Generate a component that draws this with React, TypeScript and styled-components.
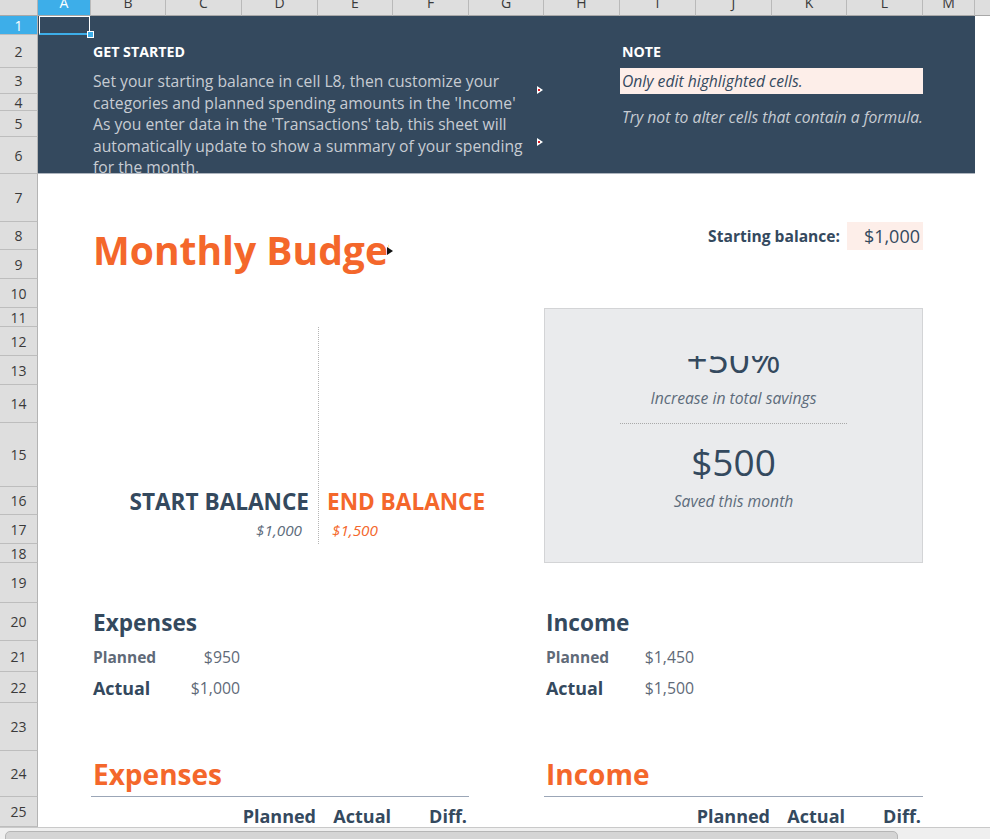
import React from 'react';
import styled, { createGlobalStyle } from 'styled-components';

const COLS = ['A', 'B', 'C', 'D', 'E', 'F', 'G', 'H', 'I', 'J', 'K', 'L', 'M', 'N'];
const colWidths = [53, 75, 76, 76, 75, 76, 75, 76, 76, 76, 75, 76, 52, 76];
const rowHeights = [19, 33, 26, 17, 26, 37, 48, 28, 29, 29, 19, 29, 29, 38, 64, 28, 29, 19, 40, 38, 31, 31, 48, 46, 30];

const dark = '#34495e';
const orange = '#f4672b';
const muted = '#5d6b7b';

const col = (c: string) => COLS.indexOf(c) + 2;
// grid-area for a cell range, in sheet coordinates (row 1 = first sheet row)
const area = (r1: number, c1: string, r2 = r1, c2 = c1) =>
  `${r1 + 1} / ${col(c1)} / ${r2 + 2} / ${col(c2) + 1}`;

const GlobalStyle = createGlobalStyle`
  html, body {
    margin: 0;
    padding: 0;
    background: #ffffff;
    overflow: hidden;
  }
  body {
    font-family: "Open Sans", "Noto Sans", sans-serif;
  }
`;

const Page = styled.div`
  width: 990px;
  height: 839px;
  display: flex;
  flex-direction: column;
  overflow: hidden;
`;

const Sheet = styled.div`
  display: grid;
  grid-template-columns: 38px ${colWidths.map((w) => `${w}px`).join(' ')};
  grid-template-rows: 16px ${rowHeights.map((h) => `${h}px`).join(' ')};
  height: 827px;
  flex: none;
`;

const Corner = styled.div`
  grid-area: 1 / 1 / 2 / 2;
  background: #dcdcdc;
  border-right: 1px solid #b4b4b4;
  border-bottom: 1px solid #a8a8a8;
  box-sizing: border-box;
`;

const ColHead = styled.div<{ $active?: boolean }>`
  grid-row: 1;
  display: flex;
  justify-content: center;
  align-items: flex-start;
  overflow: hidden;
  box-sizing: border-box;
  background: ${(p) => (p.$active ? '#3daee9' : '#dedede')};
  color: ${(p) => (p.$active ? '#ffffff' : '#3a3a3a')};
  border-right: 1px solid #b9b9b9;
  border-bottom: 1px solid #a8a8a8;
  font-size: 14px;
  line-height: 16px;

  span {
    margin-top: -5px;
  }
`;

const RowHead = styled.div<{ $active?: boolean }>`
  grid-column: 1;
  display: flex;
  justify-content: center;
  align-items: center;
  box-sizing: border-box;
  background: ${(p) => (p.$active ? '#3daee9' : '#dedede')};
  color: ${(p) => (p.$active ? '#ffffff' : '#3a3a3a')};
  border-right: 1px solid #b4b4b4;
  border-bottom: 1px solid #bdbdbd;
  font-size: 14px;
  overflow: hidden;
`;

const Banner = styled.div`
  grid-area: ${area(1, 'A', 6, 'M')};
  background: ${dark};
  border-bottom: 1px solid #aeb5be;
`;

const Cell = styled.div<{
  $area: string;
  $align?: 'flex-start' | 'center' | 'flex-end';
  $valign?: 'flex-start' | 'center' | 'flex-end';
  $pad?: string;
  $clip?: boolean;
}>`
  grid-area: ${(p) => p.$area};
  display: flex;
  justify-content: ${(p) => p.$align || 'flex-start'};
  align-items: ${(p) => p.$valign || 'center'};
  padding: ${(p) => p.$pad || '0 2px'};
  box-sizing: border-box;
  white-space: nowrap;
  overflow: ${(p) => (p.$clip ? 'hidden' : 'visible')};
  position: relative;
  min-width: 0;
`;

const Selected = styled.div`
  grid-area: ${area(1, 'A')};
  position: relative;
  margin: 0 1px 0 1px;
  border: 1px solid #ffffff;
  border-bottom: 2px solid #3daee9;
  z-index: 2;
`;

const Handle = styled.div`
  position: absolute;
  right: -5px;
  bottom: -5px;
  width: 5px;
  height: 5px;
  background: #3daee9;
  border: 1px solid #ffffff;
`;

const SectionLabel = styled.div`
  color: #ffffff;
  font-weight: 700;
  font-size: 14.2px;
`;

const Intro = styled.div`
  color: #c7ccd3;
  font-size: 15.7px;
  line-height: 21.6px;
  padding-top: 3px;
`;

const Overflow = styled.svg<{ $top: number; $right: number }>`
  position: absolute;
  right: ${(p) => p.$right}px;
  top: ${(p) => p.$top}px;
`;

const NoteLine = styled.div<{ $highlight?: boolean }>`
  flex: 1;
  align-self: stretch;
  display: flex;
  align-items: center;
  padding-left: 2px;
  font-style: italic;
  font-size: 15.7px;
  background: ${(p) => (p.$highlight ? '#fdeee9' : 'transparent')};
  color: ${(p) => (p.$highlight ? '#34495e' : '#c7ccd3')};
`;

const Title = styled.div`
  flex: 1;
  min-width: 0;
  overflow: hidden;
  color: ${orange};
  font-weight: 700;
  font-size: 39px;
  line-height: 1.2;
`;

const BalanceLabel = styled.div`
  color: ${dark};
  font-weight: 700;
  font-size: 15.6px;
`;

const BalanceValue = styled.div`
  flex: 1;
  align-self: stretch;
  display: flex;
  align-items: center;
  justify-content: flex-end;
  padding-right: 3px;
  background: #fdeee9;
  color: ${dark};
  font-size: 18px;
`;

const DottedDivider = styled.div`
  grid-area: ${area(12, 'E', 17, 'E')};
  border-left: 1px dotted #b5b5b5;
`;

const BigLabel = styled.div<{ $tone: 'dark' | 'orange' }>`
  color: ${(p) => (p.$tone === 'orange' ? orange : dark)};
  font-weight: 700;
  font-size: 22.6px;
`;

const SmallAmount = styled.div<{ $tone: 'dark' | 'orange' }>`
  color: ${(p) => (p.$tone === 'orange' ? orange : muted)};
  font-style: italic;
  font-size: 15.3px;
`;

const SavingsBox = styled.div`
  grid-area: ${area(11, 'H', 18, 'L')};
  background: #eaebed;
  border: 1px solid #d3d4d6;
`;

const BigFigure = styled.div<{ $shift?: number }>`
  color: ${dark};
  font-size: 37px;
  line-height: ${(p) => (p.$shift ? 1 : 'normal')};
  margin-top: ${(p) => p.$shift || 0}px;
`;

const Caption = styled.div`
  color: ${muted};
  font-style: italic;
  font-size: 15.7px;
`;

const DottedRule = styled.div`
  grid-area: ${area(15, 'I', 15, 'K')};
  border-top: 1px dotted #a9a9a9;
`;

const SummaryHeading = styled.div`
  color: ${dark};
  font-weight: 700;
  font-size: 22.6px;
`;

const SummaryKey = styled.div<{ $strong?: boolean }>`
  color: ${(p) => (p.$strong ? dark : '#5f6a78')};
  font-weight: 700;
  font-size: ${(p) => (p.$strong ? 17.9 : 15.5)}px;
`;

const SummaryValue = styled.div`
  color: #5f6a78;
  font-size: 15.8px;
`;

const TableHeading = styled.div`
  flex: 1;
  align-self: stretch;
  display: flex;
  align-items: center;
  padding-left: 2px;
  color: ${orange};
  font-weight: 700;
  font-size: 28px;
  border-bottom: 1px solid #9ba6b7;
`;

const ColumnLabel = styled.div`
  color: ${dark};
  font-weight: 700;
  font-size: 18px;
  line-height: 22px;
`;

const Footer = styled.div`
  flex: 1;
  background: #efefef;
  border-top: 1px solid #c9c9c9;
  padding: 3px 0 0 5px;
  box-sizing: border-box;
`;

const ScrollThumb = styled.div`
  width: 893px;
  height: 12px;
  box-sizing: border-box;
  background: #d5d5d5;
  border: 1px solid #b6b6b6;
  border-radius: 5px 5px 0 0;
`;

const Arrow = ({ top, right = 1, dot }: { top: number; right?: number; dot?: boolean }) => (
  <Overflow $top={top} $right={right} width="6" height="8" viewBox="0 0 6 8">
    <polygon points="0,0 6,4 0,8" fill={dot ? '#ffffff' : '#111111'} />
    {dot && <rect x="1" y="3" width="2" height="2" fill="#e01b24" />}
  </Overflow>
);

const introLines = [
  'Set your starting balance in cell L8, then customize your',
  "categories and planned spending amounts in the 'Income'",
  "As you enter data in the 'Transactions' tab, this sheet will",
  'automatically update to show a summary of your spending',
  'for the month.',
];

const summaries = [
  { key: 'exp', title: 'Expenses', at: 'B', valueCol: 'C', planned: '$950', actual: '$1,000' },
  { key: 'inc', title: 'Income', at: 'H', valueCol: 'I', planned: '$1,450', actual: '$1,500' },
];

const tables = [
  { key: 'exp', title: 'Expenses', from: 'B', to: 'F', cols: ['D', 'E', 'F'] },
  { key: 'inc', title: 'Income', from: 'H', to: 'L', cols: ['J', 'K', 'L'] },
];

const App = () => {
  return (
    <Page>
      <GlobalStyle />
      <Sheet>
        <Corner />
        {COLS.map((c, i) => (
          <ColHead key={c} $active={c === 'A'} style={{ gridColumn: i + 2 }}>
            <span>{c}</span>
          </ColHead>
        ))}
        {rowHeights.map((_, i) => (
          <RowHead key={i} $active={i === 0} style={{ gridRow: i + 2 }}>
            {i + 1}
          </RowHead>
        ))}

        <Banner />
        <Selected>
          <Handle />
        </Selected>

        <Cell $area={area(2, 'B', 2, 'D')}>
          <SectionLabel>GET STARTED</SectionLabel>
        </Cell>
        <Cell $area={area(3, 'B', 6, 'G')} $valign="flex-start" $clip>
          <Intro>
            {introLines.map((l) => (
              <div key={l}>{l}</div>
            ))}
          </Intro>
          <Arrow top={18} dot />
          <Arrow top={70} dot />
        </Cell>

        <Cell $area={area(2, 'I', 2, 'L')}>
          <SectionLabel>NOTE</SectionLabel>
        </Cell>
        <Cell $area={area(3, 'I', 3, 'L')} $pad="0">
          <NoteLine $highlight>Only edit highlighted cells.</NoteLine>
        </Cell>
        <Cell $area={area(4, 'I', 5, 'L')} $pad="0" $valign="flex-start">
          <NoteLine style={{ paddingTop: 3 }}>Try not to alter cells that contain a formula.</NoteLine>
        </Cell>

        <Cell $area={area(8, 'B', 9, 'E')} $pad="0 4px 0 2px">
          <Title>Monthly Budget</Title>
          <Arrow top={25} right={0} />
        </Cell>
        <Cell $area={area(8, 'J', 8, 'K')} $align="flex-end" $pad="0 7px 0 0">
          <BalanceLabel>Starting balance:</BalanceLabel>
        </Cell>
        <Cell $area={area(8, 'L')} $pad="0">
          <BalanceValue>$1,000</BalanceValue>
        </Cell>

        <DottedDivider />
        <Cell $area={area(16, 'B', 16, 'D')} $align="flex-end" $pad="0 9px 0 0">
          <BigLabel $tone="dark">START BALANCE</BigLabel>
        </Cell>
        <Cell $area={area(16, 'E', 16, 'G')} $pad="0 0 0 9px">
          <BigLabel $tone="orange">END BALANCE</BigLabel>
        </Cell>
        <Cell $area={area(17, 'B', 17, 'D')} $align="flex-end" $pad="0 16px 0 0">
          <SmallAmount $tone="dark">$1,000</SmallAmount>
        </Cell>
        <Cell $area={area(17, 'E', 17, 'G')} $pad="0 0 0 14px">
          <SmallAmount $tone="orange">$1,500</SmallAmount>
        </Cell>

        <SavingsBox />
        <Cell $area={area(13, 'H', 13, 'L')} $align="center" $valign="flex-start" $clip>
          <BigFigure $shift={-16}>+50%</BigFigure>
        </Cell>
        <Cell $area={area(14, 'H', 14, 'L')} $align="center" $valign="flex-start" $pad="2px 0 0">
          <Caption>Increase in total savings</Caption>
        </Cell>
        <DottedRule />
        <Cell $area={area(15, 'H', 15, 'L')} $align="center" $valign="flex-end">
          <BigFigure>$500</BigFigure>
        </Cell>
        <Cell $area={area(16, 'H', 16, 'L')} $align="center">
          <Caption>Saved this month</Caption>
        </Cell>

        {summaries.map((s) => (
          <React.Fragment key={s.key}>
            <Cell $area={area(20, s.at)}>
              <SummaryHeading>{s.title}</SummaryHeading>
            </Cell>
            <Cell $area={area(21, s.at)}>
              <SummaryKey>Planned</SummaryKey>
            </Cell>
            <Cell $area={area(21, s.valueCol)} $align="flex-end">
              <SummaryValue>{s.planned}</SummaryValue>
            </Cell>
            <Cell $area={area(22, s.at)}>
              <SummaryKey $strong>Actual</SummaryKey>
            </Cell>
            <Cell $area={area(22, s.valueCol)} $align="flex-end">
              <SummaryValue>{s.actual}</SummaryValue>
            </Cell>
          </React.Fragment>
        ))}

        {tables.map((t) => (
          <React.Fragment key={t.key}>
            <Cell $area={area(24, t.from, 24, t.to)} $pad="0">
              <TableHeading>{t.title}</TableHeading>
            </Cell>
            {['Planned', 'Actual', 'Diff.'].map((label, i) => (
              <Cell key={label} $area={area(25, t.cols[i])} $align="flex-end" $valign="flex-end" $pad="0 2px 0 0">
                <ColumnLabel>{label}</ColumnLabel>
              </Cell>
            ))}
          </React.Fragment>
        ))}
      </Sheet>
      <Footer>
        <ScrollThumb />
      </Footer>
    </Page>
  );
};

export default App;
